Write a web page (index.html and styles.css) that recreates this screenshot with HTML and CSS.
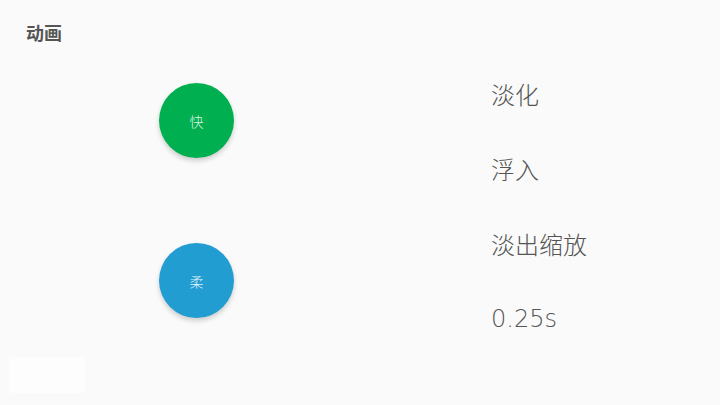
FILE: index.html
```html
<!DOCTYPE html>
<html lang="zh">
<head>
<meta charset="utf-8">
<link rel="stylesheet" href="styles.css">
</head>
<body>
<div class="page">
  <header class="title">动画</header>
  <main class="content">
    <div class="balls">
      <div class="ball ball-fast">快</div>
      <div class="ball ball-soft">柔</div>
    </div>
    <ul class="options">
      <li>淡化</li>
      <li>浮入</li>
      <li>淡出缩放</li>
      <li class="duration">0.25s</li>
    </ul>
  </main>
  <div class="ghost"></div>
</div>
</body>
</html>
```
FILE: styles.css
```css
html, body {
  margin: 0;
  padding: 0;
  background: #fafafa;
}
body {
  width: 720px;
  height: 405px;
  overflow: hidden;
  font-family: Roboto, "Noto Sans CJK SC", sans-serif;
}
.page {
  position: relative;
  height: 405px;
}
.title {
  padding: 22px 0 0 26px;
  font-size: 18px;
  line-height: 24px;
  font-weight: bold;
  color: #555;
}
.content {
  display: grid;
  grid-template-columns: 393px 1fr;
}
.balls {
  display: flex;
  flex-direction: column;
  align-items: center;
  gap: 85px;
  padding-top: 37px;
}
.ball {
  width: 75px;
  height: 75px;
  border-radius: 50%;
  display: flex;
  align-items: center;
  justify-content: center;
  color: rgba(255,255,255,0.88);
  font-family: "Noto Sans CJK SC", sans-serif;
  font-weight: 300;
  font-size: 14px;
  box-shadow: 0 3px 5px rgba(0,0,0,0.18);
}
.ball-fast { background: #00b050; }
.ball-soft { background: #219dd2; }
.options {
  list-style: none;
  margin: 0;
  padding: 32px 0 0 98px;
  display: flex;
  flex-direction: column;
  gap: 43px;
}
.options li {
  font-family: "Noto Sans CJK SC", sans-serif;
  font-weight: 300;
  font-size: 24px;
  line-height: 32px;
  color: #555;
}
.options .duration {
  font-family: "DejaVu Sans", "Noto Sans CJK SC", sans-serif;
  font-weight: 200;
}
.ghost {
  position: absolute;
  left: 9px;
  top: 357px;
  width: 76px;
  height: 36px;
  background: #fdfdfd;
}
```
